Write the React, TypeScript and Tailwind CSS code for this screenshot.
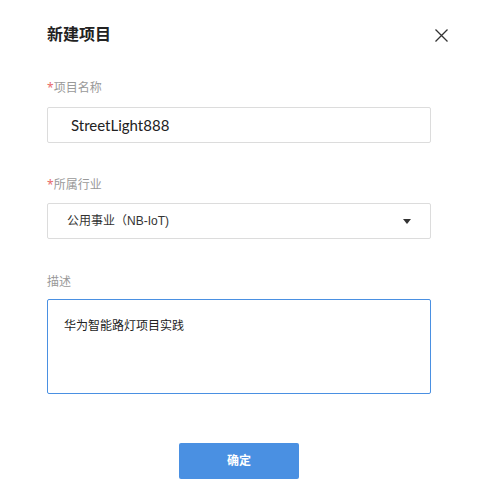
import React from "react";

export default function App() {
  const font = { fontFamily: '"Noto Sans", "Noto Sans CJK SC", sans-serif' };
  return (
    <div className="w-[478px] h-[502px] bg-white" style={font}>
      <div className="flex items-center justify-between pl-[47px] pr-[30px] pt-[24px]">
        <div className="text-[16px] leading-[20px] font-bold text-[#222]">新建项目</div>
        <svg width="13" height="13" viewBox="0 0 13 13" className="mt-[2px]">
          <path d="M0.5 0.5 L12.5 12.5 M12.5 0.5 L0.5 12.5" stroke="#333" strokeWidth="1.3" fill="none" />
        </svg>
      </div>
      <div className="flex flex-col px-[47px]">
        <div className="mt-[34px] text-[12px] leading-[20px] text-[#999]">
          <span className="text-[#e86a6a]">*</span>项目名称
        </div>
        <div
          className="mt-[9px] h-[36px] border border-[#dcdcdc] rounded-[2px] flex items-center pl-[23px] text-[15px] text-[#222]"
          style={{ fontFamily: 'Lato, "Noto Sans CJK SC", sans-serif' }}
        >
          StreetLight888
        </div>
        <div className="mt-[32px] text-[12px] leading-[20px] text-[#999]">
          <span className="text-[#e86a6a]">*</span>所属行业
        </div>
        <div className="mt-[8px] h-[36px] border border-[#dcdcdc] rounded-[2px] flex items-center justify-between pl-[19px] pr-[19px] text-[12px] text-[#333]">
          <span style={{ fontFamily: '"Liberation Sans", "Noto Sans CJK SC", sans-serif' }}>公用事业（NB-IoT)</span>
          <svg width="8" height="5" viewBox="0 0 8 5">
            <path d="M0 0 L8 0 L4 5 Z" fill="#333" />
          </svg>
        </div>
        <div className="mt-[33px] text-[12px] leading-[20px] text-[#999]">描述</div>
        <div className="mt-[7px] h-[95px] border border-[#4a90e2] rounded-[2px] pl-[16px] pt-[16px] text-[12px] leading-[20px] text-[#222]">
          华为智能路灯项目实践
        </div>
        <div className="mt-[49px] flex justify-center">
          <div className="w-[120px] h-[36px] bg-[#4a90e2] rounded-[2px] flex items-center justify-center text-white text-[12px] font-bold">
            确定
          </div>
        </div>
      </div>
    </div>
  );
}
